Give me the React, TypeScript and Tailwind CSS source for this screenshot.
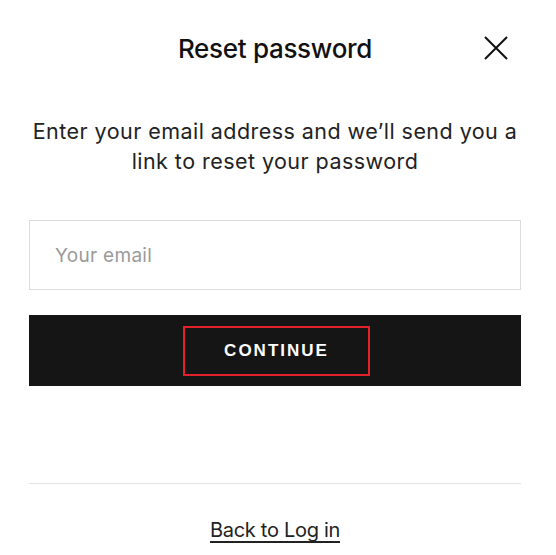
import React from 'react';

const CloseIcon: React.FC = () => (
  <svg width="24" height="24" viewBox="0 0 24 24" fill="none" stroke="#111" strokeWidth="2">
    <path d="M1 1L23 23M23 1L1 23" />
  </svg>
);

const App: React.FC = () => {
  return (
    <div className="w-[556px] h-[555px] bg-white overflow-hidden" style={{ fontFamily: 'Inter, "Noto Sans", sans-serif' }}>
      <div className="pl-[29px] pr-[35px]">
        <div className="grid grid-cols-[1fr_auto_1fr] items-center h-[96px]">
          <div />
          <h1 className="text-[26px] font-medium text-[#111] tracking-[-0.3px]">Reset password</h1>
          <button className="justify-self-end mr-[13px] w-6 h-6 flex items-center justify-center">
            <CloseIcon />
          </button>
        </div>

        <p className="mt-[20px] text-center text-[21.5px] leading-[30px] text-[#222] tracking-[0.45px]">
          Enter your email address and we’ll send you a link to reset your password
        </p>

        <input
          type="email"
          placeholder="Your email"
          className="mt-[44px] block w-full h-[70px] border border-[#dcdcdc] px-[25px] text-[19px] text-[#222] tracking-[0.3px] placeholder:text-[#9a9a9a] outline-none"
        />

        <button className="mt-[25px] w-full h-[71px] bg-[#151515] flex items-center justify-center">
          <span
            className="ml-[3px] w-[187px] h-[50px] border-2 border-[#e3212b] flex items-center justify-center text-white text-[17px] font-bold tracking-[2px]"
            style={{ fontFamily: '"Liberation Sans", Arial, sans-serif' }}
          >
            CONTINUE
          </span>
        </button>

        <div className="mt-[97px] border-t border-[#e2e2e2]" />

        <div className="mt-[31px] text-center">
          <a href="#" className="text-[20px] text-[#222] underline underline-offset-[4px] tracking-[-0.3px]">
            Back to Log in
          </a>
        </div>
      </div>
    </div>
  );
};

export default App;
